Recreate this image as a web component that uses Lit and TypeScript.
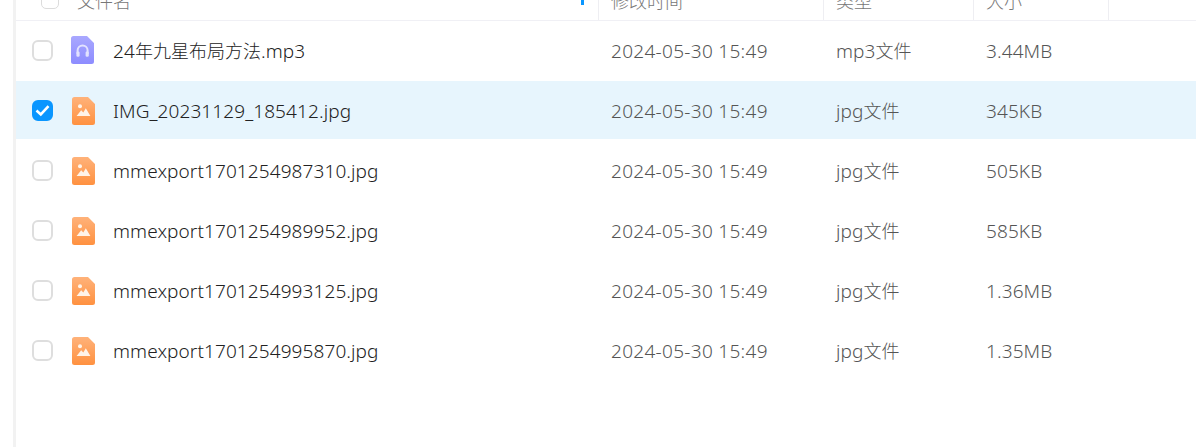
import { LitElement, html, css, svg } from "lit";
import { customElement } from "lit/decorators.js";

const rows = [
  { name: "24年九星布局方法.mp3", type: "mp3文件", size: "3.44MB", kind: "audio", checked: false },
  { name: "IMG_20231129_185412.jpg", type: "jpg文件", size: "345KB", kind: "image", checked: true },
  { name: "mmexport1701254987310.jpg", type: "jpg文件", size: "505KB", kind: "image", checked: false },
  { name: "mmexport1701254989952.jpg", type: "jpg文件", size: "585KB", kind: "image", checked: false },
  { name: "mmexport1701254993125.jpg", type: "jpg文件", size: "1.36MB", kind: "image", checked: false },
  { name: "mmexport1701254995870.jpg", type: "jpg文件", size: "1.35MB", kind: "image", checked: false },
];

const fileShape = "M2.5 0H16L23 7V25.5a2.5 2.5 0 0 1-2.5 2.5H2.5a2.5 2.5 0 0 1-2.5-2.5V2.5a2.5 2.5 0 0 1 2.5-2.5Z";

function mixed(text: string) {
  return text.split(/([\u4e00-\u9fff]+)/).map((p) =>
    /[\u4e00-\u9fff]/.test(p) ? html`<span class="cjk">${p}</span>` : p
  );
}

function audioIcon() {
  return html`<svg class="icon audio" width="23" height="28" viewBox="0 0 23 28">
    <defs><linearGradient id="ga" x1="0" y1="0" x2="0" y2="1"><stop offset="0" stop-color="#a9a8ff"/><stop offset="1" stop-color="#8d8cff"/></linearGradient></defs>
    <path d=${fileShape} fill="url(#ga)"/>
    ${svg`<path d="M6.6 18V14.6a5 5 0 0 1 10 0V18" fill="none" stroke="#e2e2ff" stroke-width="2"/>
    <rect x="5.4" y="15.5" width="3.2" height="5.2" rx="1.3" fill="#e2e2ff"/><rect x="14.6" y="15.5" width="3.2" height="5.2" rx="1.3" fill="#e2e2ff"/>`}
  </svg>`;
}

function imageIcon(id: number) {
  return html`<svg class="icon image" width="23" height="28" viewBox="0 0 23 28">
    <defs><linearGradient id="gi${id}" x1="0" y1="0" x2="0" y2="1"><stop offset="0" stop-color="#ffb27a"/><stop offset="1" stop-color="#ff9140"/></linearGradient></defs>
    <path d=${fileShape} fill="url(#gi${id})"/>
    ${svg`<circle cx="8" cy="9.2" r="2" fill="#fff3e8"/>
    <path d="M4.6 19L9.2 13.2L11.3 15.6L13.8 11.2L18.4 19Z" fill="#fff3e8"/>`}
  </svg>`;
}

@customElement("app-root")
export class AppRoot extends LitElement {
  static styles = css`
    :host {
      display: block;
      width: 1196px;
      height: 447px;
      overflow: hidden;
      background: #fff;
      font-family: "Noto Sans", "Noto Sans CJK SC", sans-serif;
    }
    .page {
      height: 467px;
      margin-left: 13px;
      border-left: 3px solid #f2f2f2;
    }
    .head {
      display: grid;
      grid-template-columns: 583px 225px 150px 135px 1fr;
      height: 41px;
      margin-top: -20px;
      box-sizing: border-box;
      border-bottom: 1px solid #f0f0f5;
      font-family: "Noto Sans CJK SC", sans-serif;
      font-weight: 300;
      font-size: 18px;
      line-height: 40px;
      color: #777;
    }
    .hc {
      border-right: 1px solid #eeeef2;
      padding-left: 12px;
      position: relative;
    }
    .hc:last-child { border-right: 0; }
    .hc.first {
      display: flex;
      align-items: center;
      padding-left: 25px;
      gap: 18px;
    }
    .hbox {
      width: 18px;
      height: 18px;
      border: 1.5px solid #dcdcdc;
      border-radius: 5px;
      box-sizing: border-box;
    }
    .sort {
      position: absolute;
      left: 565px;
      top: 20px;
      width: 3px;
      height: 5px;
      background: #0a96ff;
    }
    .row {
      display: grid;
      grid-template-columns: 583px 225px 150px 135px 1fr;
      height: 58px;
      margin-bottom: 2px;
      align-items: center;
      font-size: 19px;
      font-weight: 300;
      letter-spacing: 0.1px;
      color: #555;
    }
    .cjk {
      font-family: "Noto Sans CJK SC", sans-serif;
      font-size: 18px;
      letter-spacing: 0;
    }
    .row.sel { background: #e7f5fd; }
    .name {
      display: flex;
      align-items: center;
      padding-left: 16px;
      color: #222;
    }
    .label { padding-top: 1px; }
    .cb {
      width: 21px;
      height: 21px;
      border: 2px solid #dedede;
      border-radius: 6px;
      box-sizing: border-box;
      background: #fff;
      display: flex;
      align-items: center;
      justify-content: center;
      flex: none;
    }
    .cb.on { background: #0a96ff; border-color: #0a96ff; }
    .icon { flex: none; }
    .icon.audio { margin-left: 18px; margin-right: 19px; }
    .icon.image { margin-left: 19px; margin-right: 18px; margin-top: 1px; }
    .cell { padding-left: 12px; padding-top: 1px; }
    .date { letter-spacing: 0.3px; }
  `;

  render() {
    return html`<div class="page">
      <div class="head">
        <div class="hc first"><span class="hbox"></span><span>文件名</span><span class="sort"></span></div>
        <div class="hc">修改时间</div>
        <div class="hc">类型</div>
        <div class="hc">大小</div>
        <div class="hc"></div>
      </div>
      <div class="body">
        ${rows.map(
          (r, i) => html`<div class="row ${r.checked ? "sel" : ""}">
            <div class="name">
              <span class="cb ${r.checked ? "on" : ""}">
                ${r.checked
                  ? html`<svg width="15" height="13" viewBox="0 0 15 13"><path d="M1.5 6.5L5.8 10.5L13.5 2.2" fill="none" stroke="#fff" stroke-width="2.6"/></svg>`
                  : ""}
              </span>
              ${r.kind === "audio" ? audioIcon() : imageIcon(i)}
              <span class="label">${mixed(r.name)}</span>
            </div>
            <div class="cell date">2024-05-30 15:49</div>
            <div class="cell">${mixed(r.type)}</div>
            <div class="cell">${r.size}</div>
            <div></div>
          </div>`
        )}
      </div>
    </div>`;
  }
}
